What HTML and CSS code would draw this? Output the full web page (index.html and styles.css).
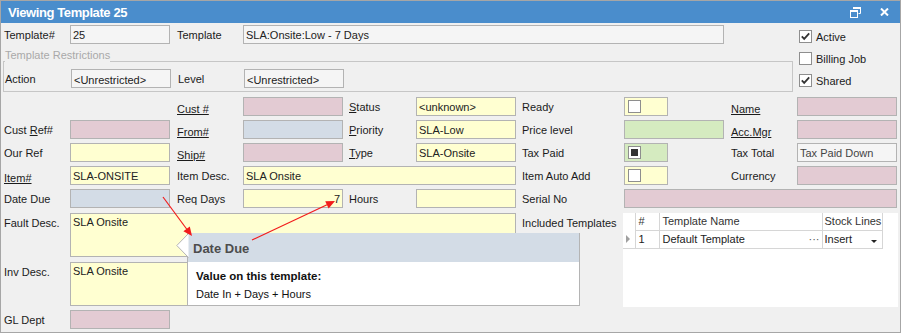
FILE: index.html
```html
<!DOCTYPE html>
<html lang="en">

<head>
    <meta charset="UTF-8">
    <title>Viewing Template 25</title>
    <link rel="stylesheet" href="styles.css">
</head>

<body>
    <div class="window">
        <div class="titlebar">
            <span class="title">Viewing Template 25</span>
            <svg class="tb-restore" width="11" height="11" viewBox="0 0 11 11">
                <path d="M3.5 0.5h7v6h-2" fill="none" stroke="#fff" stroke-width="1"/>
                <rect x="3" y="0" width="8" height="2" fill="#fff"/>
                <rect x="0.5" y="3.5" width="7" height="7" fill="none" stroke="#fff" stroke-width="1"/>
                <rect x="0" y="3" width="8" height="2" fill="#fff"/>
            </svg>
            <svg class="tb-close" width="9" height="8" viewBox="0 0 9 8">
                <path d="M1 0.5l7 7M8 0.5l-7 7" stroke="#fff" stroke-width="2"/>
            </svg>
        </div>

        <div class="content">
            <div class="top">
                <div class="top-left">
                    <div class="row-top">
                        <span class="lbl">Template#</span>
                        <div class="fld grey w100">25</div>
                        <span class="lbl pl7">Template</span>
                        <div class="fld grey w481">SLA:Onsite:Low - 7 Days</div>
                    </div>
                    <div class="legend-row"><span>Template Restrictions</span></div>
                    <div class="group">
                        <span class="lbl">Action</span>
                        <div class="fld grey w100 low">&lt;Unrestricted&gt;</div>
                        <span class="lbl pl7">Level</span>
                        <div class="fld grey w100 low">&lt;Unrestricted&gt;</div>
                    </div>
                </div>
                <div class="flags">
                    <div class="flag">
                        <svg class="box" width="13" height="13" viewBox="0 0 13 13">
                            <rect x="0.5" y="0.5" width="12" height="12" fill="#fff" stroke="#8e8e8e"/>
                            <path d="M2.8 6.3l2.4 2.6 5-5.6" fill="none" stroke="#333" stroke-width="1.8"/>
                        </svg>
                        <span>Active</span>
                    </div>
                    <div class="flag">
                        <svg class="box" width="13" height="13" viewBox="0 0 13 13">
                            <rect x="0.5" y="0.5" width="12" height="12" fill="#fff" stroke="#8e8e8e"/>
                        </svg>
                        <span>Billing Job</span>
                    </div>
                    <div class="flag">
                        <svg class="box" width="13" height="13" viewBox="0 0 13 13">
                            <rect x="0.5" y="0.5" width="12" height="12" fill="#fff" stroke="#8e8e8e"/>
                            <path d="M2.8 6.3l2.4 2.6 5-5.6" fill="none" stroke="#333" stroke-width="1.8"/>
                        </svg>
                        <span>Shared</span>
                    </div>
                </div>
            </div>

            <div class="main">
                <!-- row 1 -->
                <div></div>
                <div></div>
                <span class="lbl pl7"><span class="link">Cust #</span></span>
                <div class="fld pink"></div>
                <span class="lbl pl6"><span><u>S</u>tatus</span></span>
                <div class="fld yellow">&lt;unknown&gt;</div>
                <span class="lbl pl6">Ready</span>
                <div class="fld yellow chk"><span class="cb"></span></div>
                <span class="lbl pl7"><span class="link">Name</span></span>
                <div class="fld pink"></div>

                <!-- row 2 -->
                <span class="lbl"><span>Cust <u>R</u>ef#</span></span>
                <div class="fld pink"></div>
                <span class="lbl pl7"><span class="link">From#</span></span>
                <div class="fld blue"></div>
                <span class="lbl pl6"><span><u>P</u>riority</span></span>
                <div class="fld yellow">SLA-Low</div>
                <span class="lbl pl6">Price level</span>
                <div class="fld green"></div>
                <span class="lbl pl7"><span class="link">Acc.Mgr</span></span>
                <div class="fld pink"></div>

                <!-- row 3 -->
                <span class="lbl">Our Ref</span>
                <div class="fld yellow"></div>
                <span class="lbl pl7"><span class="link">Ship#</span></span>
                <div class="fld pink"></div>
                <span class="lbl pl6"><span><u>T</u>ype</span></span>
                <div class="fld yellow">SLA-Onsite</div>
                <span class="lbl pl6">Tax Paid</span>
                <div class="fld green chk"><span class="cb filled"></span></div>
                <span class="lbl pl7">Tax Total</span>
                <div class="fld grey dim">Tax Paid Down</div>

                <!-- row 4 -->
                <span class="lbl"><span class="link">Item#</span></span>
                <div class="fld yellow">SLA-ONSITE</div>
                <span class="lbl pl7">Item Desc.</span>
                <div class="fld yellow span3">SLA Onsite</div>
                <span class="lbl pl6">Item Auto Add</span>
                <div class="fld yellow chk"><span class="cb"></span></div>
                <span class="lbl pl7">Currency</span>
                <div class="fld pink"></div>

                <!-- row 5 -->
                <span class="lbl">Date Due</span>
                <div class="fld blue"></div>
                <span class="lbl pl7">Req Days</span>
                <div class="fld yellow num">7</div>
                <span class="lbl pl6">Hours</span>
                <div class="fld yellow"></div>
                <span class="lbl pl6">Serial No</span>
                <div class="fld pink span3"></div>

                <!-- rows 6-8 -->
                <span class="lbl top">Fault Desc.</span>
                <div class="fld yellow area span5">SLA Onsite</div>
                <span class="lbl pl6 top">Included Templates</span>

                <div class="tgrid-wrap">
                    <table class="tgrid">
                        <colgroup>
                            <col class="c-ind">
                            <col class="c-num">
                            <col class="c-name">
                            <col class="c-stock">
                            <col>
                        </colgroup>
                        <tr class="th">
                            <td class="ind"></td>
                            <td>#</td>
                            <td>Template Name</td>
                            <td>Stock Lines</td>
                            <td class="rest"></td>
                        </tr>
                        <tr>
                            <td class="ind"><span class="arrow"></span></td>
                            <td>1</td>
                            <td><span class="name">Default Template</span><span class="dots">&middot;&middot;&middot;</span></td>
                            <td><span class="name">Insert</span><span class="dd"></span></td>
                            <td class="rest"></td>
                        </tr>
                    </table>
                </div>

                <span class="lbl top gl1">Inv Desc.</span>
                <div class="fld yellow area span5">SLA Onsite</div>

                <span class="lbl gl1">GL Dept</span>
                <div class="fld pink"></div>
            </div>
        </div>
    </div>

    <div class="tip">
        <svg class="tip-ptr" width="13" height="30" viewBox="0 0 13 30">
            <path d="M12.5 0.5L0.8 12.5L12.5 24.5" fill="#fff" stroke="#b4b4b4"/>
        </svg>
        <div class="tip-head">Date Due</div>
        <div class="tip-body">
            <div class="tip-strong">Value on this template:</div>
            <div class="tip-text">Date In + Days + Hours</div>
        </div>
    </div>

    <svg class="marks" width="903" height="334" viewBox="0 0 903 334">
        <line x1="163" y1="197" x2="187" y2="229.5" stroke="#f21c1c" stroke-width="1.2"/>
        <polygon points="192,236 183.4,231.2 189.8,226.4" fill="#f21c1c"/>
        <line x1="252" y1="240" x2="327" y2="204.8" stroke="#f21c1c" stroke-width="1.2"/>
        <polygon points="335,201 328.6,208.4 325.2,201.2" fill="#f21c1c"/>
    </svg>
</body>

</html>
```

FILE: styles.css
```css
* {
    margin: 0;
    padding: 0;
    box-sizing: border-box;
}

body {
    font-family: "Liberation Sans", Arial, sans-serif;
    font-size: 11px;
    color: #1b1b1b;
    background: #fff;
}

.window {
    width: 901px;
    height: 333px;
    border: 1px solid #a6a6a6;
    background: #f0f0f0;
}

/* title bar */
.titlebar {
    height: 22px;
    background: #4a8dcc;
    display: flex;
    align-items: center;
    padding: 0 11px 0 7px;
    color: #fff;
}

.title {
    flex: 1;
    font-weight: bold;
    font-size: 13px;
    letter-spacing: -0.4px;
}

.tb-restore {
    margin-right: 19px;
}

.content {
    padding: 2px 0 0 3px;
}

/* top part */
.top {
    display: flex;
}

.top-left {
    width: 789px;
}

.row-top,
.group {
    display: flex;
}

.legend-row {
    display: flex;
    height: 13px;
    margin: 5px 0 0 -1px;
    color: #a9a9a9;
    line-height: 13px;
}

.legend-row::before {
    content: "";
    width: 2px;
    border-bottom: 1px solid #c6c6c6;
}

.legend-row::after {
    content: "";
    flex: 1;
    border-bottom: 1px solid #c6c6c6;
}

.group {
    height: 30px;
    margin-left: -1px;
    padding: 7px 0 0 1px;
    border: 1px solid #c6c6c6;
    border-top: none;
}

.group .lbl:first-child,
.row-top .lbl:first-child {
    width: 66px;
}

.row-top .pl7,
.group .pl7 {
    width: 73px;
}

.flags {
    display: flex;
    flex-direction: column;
    gap: 9px;
    margin: 5px 0 0 6px;
}

.flag {
    display: flex;
    align-items: center;
    gap: 4px;
    height: 13px;
}

/* labels & fields */
.lbl {
    display: flex;
    align-items: center;
    height: 19px;
    white-space: nowrap;
}

.pl7 {
    padding-left: 7px;
}

.pl6 {
    padding-left: 6px;
}

.link {
    text-decoration: underline;
    text-underline-offset: 1px;
    padding-top: 4px;
}

.fld {
    height: 19px;
    border: 1px solid #b3b3b3;
    padding: 0 2px;
    display: flex;
    align-items: center;
    white-space: nowrap;
    overflow: hidden;
    color: #222;
}

.low {
    padding-top: 3px;
}

.w100 {
    width: 100px;
}

.w481 {
    width: 481px;
}

.yellow {
    background: #ffffd1;
}

.pink {
    background: #e3cbd3;
}

.blue {
    background: #d3dce6;
}

.green {
    background: #d5ebc0;
}

.grey {
    background: #f5f5f5;
}

.dim {
    color: #444;
}

.num {
    justify-content: flex-end;
}

.chk {
    width: 44px;
    padding-left: 3px;
}

.cb {
    width: 13px;
    height: 13px;
    border: 1px solid #8e8e8e;
    background: #fff;
    padding: 2px;
}

.cb.filled::after {
    content: "";
    display: block;
    width: 7px;
    height: 7px;
    background: #333;
}

/* main grid */
.main {
    display: grid;
    grid-template-columns: 66px 100px 73px 100px 73px 100px 108px 100px 73px 100px;
    grid-template-rows: repeat(5, 19px) 45px 45px 19px;
    row-gap: 4px;
    margin-top: 5px;
}

.span3 {
    grid-column: span 3;
}

.span5 {
    grid-column: span 5;
}

.gl1 {
    grid-column: 1;
}

.area {
    height: 44px;
    align-self: end;
    align-items: flex-start;
    padding-top: 2px;
}

.lbl.top {
    align-self: start;
    margin-top: 1px;
}

/* included templates grid */
.tgrid-wrap {
    grid-column: 8 / 11;
    grid-row: 6 / 8;
    align-self: start;
    height: 94px;
    margin: 1px 0 0 -1px;
    width: 275px;
    background: #fff;
}

.tgrid {
    width: 275px;
    border-collapse: collapse;
    table-layout: fixed;
}

.c-ind {
    width: 12px;
}

.c-num {
    width: 24px;
}

.c-name {
    width: 163px;
}

.c-stock {
    width: 60px;
}

.tgrid td {
    height: 18px;
    padding: 0 0 0 2px;
    border-right: 1px solid #d6d6d6;
    border-bottom: 1px solid #d6d6d6;
    white-space: nowrap;
    color: #222;
}

.tgrid .th td {
    height: 17px;
    color: #333;
}

.tgrid .th td.ind {
    border-bottom: none;
}

.tgrid td.rest {
    border: none;
}

.tgrid td:nth-child(2),
.tgrid td:nth-child(3) {
    padding-left: 3px;
}

.arrow {
    display: block;
    width: 0;
    height: 0;
    margin-left: 1px;
    border-left: 4px solid #a0a0a0;
    border-top: 4px solid transparent;
    border-bottom: 4px solid transparent;
}

.tgrid td .name {
    display: inline-block;
}

.dots {
    float: right;
    margin-right: 2px;
    color: #555;
}

.dd {
    float: right;
    width: 0;
    height: 0;
    margin: 7px 5px 0 0;
    border-top: 3px solid #222;
    border-left: 3px solid transparent;
    border-right: 3px solid transparent;
}

/* tooltip */
.tip {
    position: absolute;
    left: 187px;
    top: 233px;
    width: 393px;
    height: 73px;
    background: #fff;
    border: 1px solid #b4b4b4;
    border-top: none;
}

.tip-ptr {
    position: absolute;
    left: -12px;
    top: 0;
}

.tip-head {
    height: 29px;
    background: #d3dce6;
    color: #4d4d4d;
    font-weight: bold;
    font-size: 13px;
    display: flex;
    align-items: center;
    padding: 1px 0 0 5px;
}

.tip-body {
    padding: 7px 0 0 8px;
    color: #111;
}

.tip-strong {
    font-weight: bold;
    font-size: 11.5px;
    line-height: 14px;
}

.tip-text {
    margin-top: 4px;
    line-height: 14px;
}

.marks {
    position: absolute;
    left: 0;
    top: 0;
    pointer-events: none;
}
```
